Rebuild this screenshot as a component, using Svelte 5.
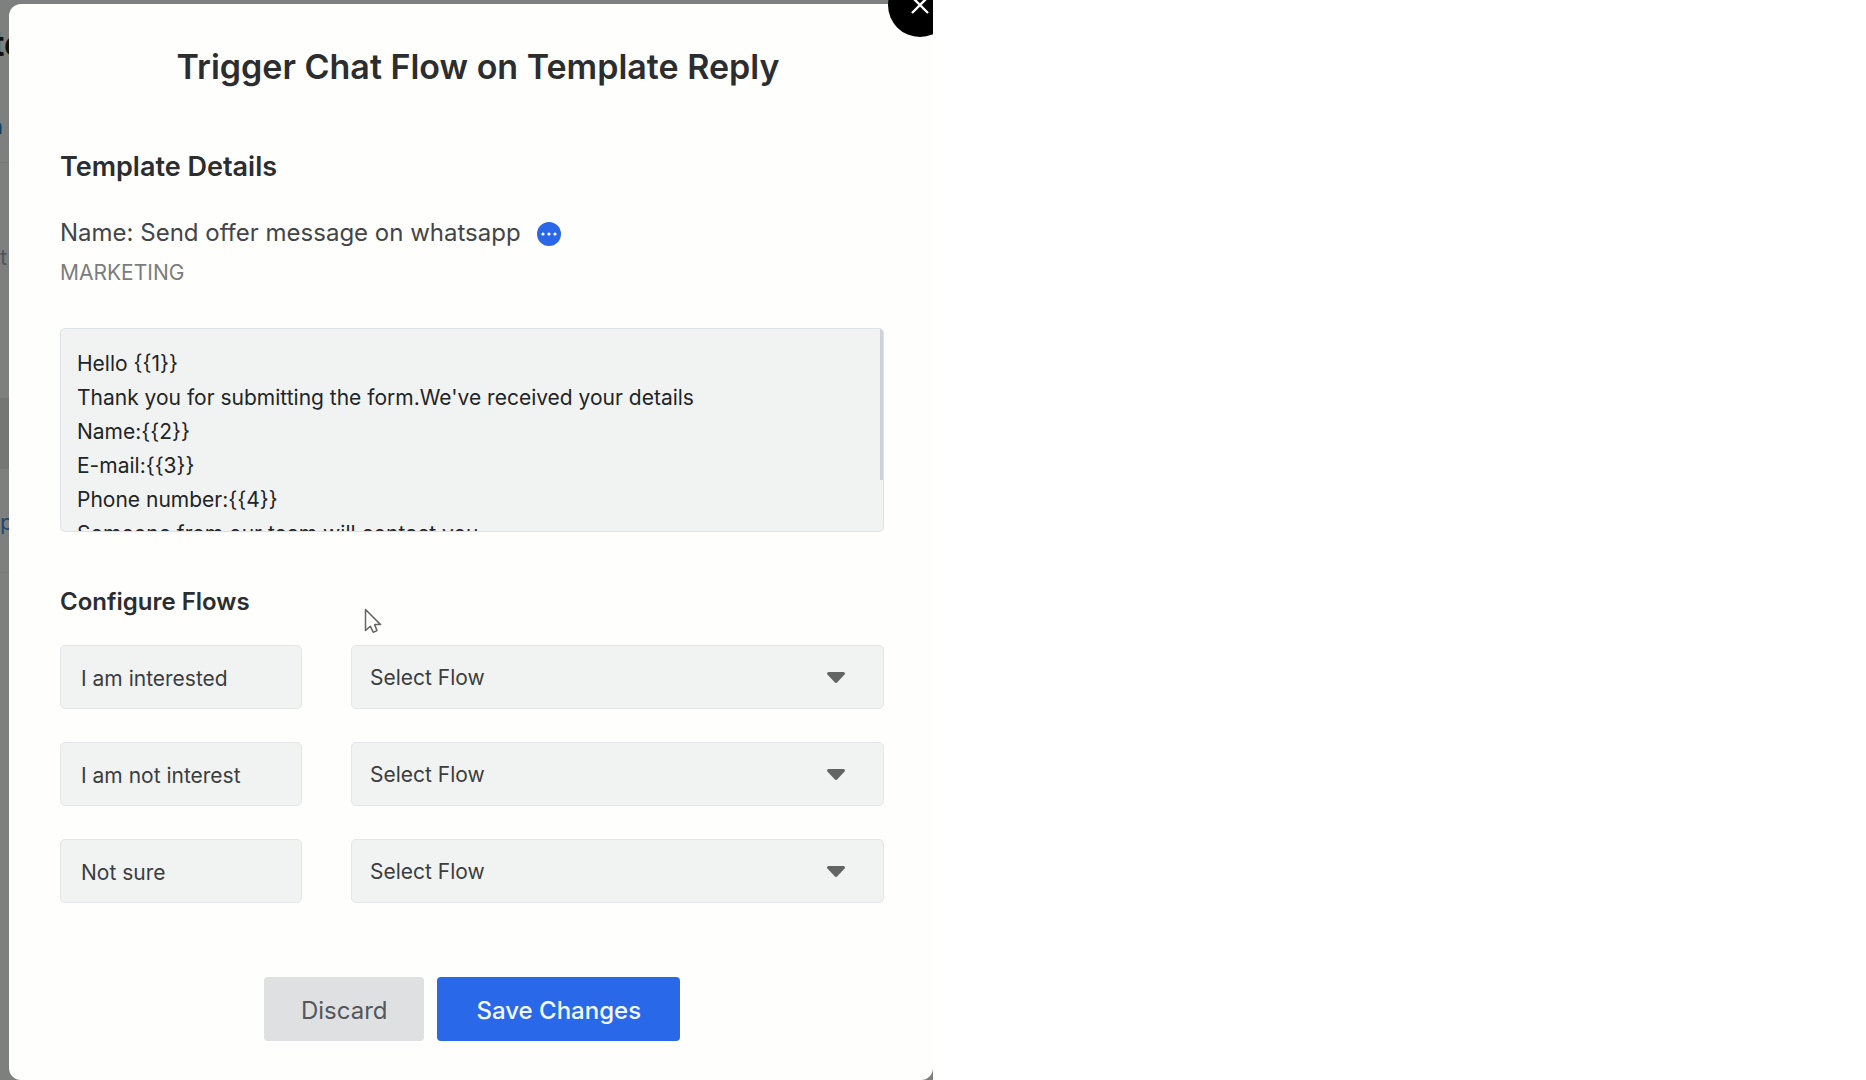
<script>
  const message = [
    'Hello {{1}}',
    "Thank you for submitting the form.We've received your details",
    'Name:{{2}}',
    'E-mail:{{3}}',
    'Phone number:{{4}}',
    'Someone from our team will contact you',
    '',
  ].join('\n');

  const replies = ['I am interested', 'I am not interest', 'Not sure'];

  // Share of the message that fits in the box, and how far it is scrolled.
  let box = $state();
  let thumbSize = $state(75);
  let thumbTop = $state(0);

  function measure() {
    thumbSize = (box.clientHeight / box.scrollHeight) * 100;
    thumbTop = (box.scrollTop / box.scrollHeight) * 100;
  }

  $effect(measure);
</script>

<div class="stage">
  <div class="behind" aria-hidden="true">
    <div class="heading">te</div>
    <div class="link">n</div>
    <div class="rule"></div>
    <div class="label">t</div>
    <div class="band"></div>
    <div class="row">p</div>
    <div class="rule last"></div>
  </div>

  <div class="modal" role="dialog" aria-labelledby="dialog-title">
    <h1 id="dialog-title">Trigger Chat Flow on Template Reply</h1>

    <h2>Template Details</h2>
    <p class="name">
      <span>Name: Send offer message on whatsapp</span>
      <button class="more" type="button" aria-label="More details">
        <svg viewBox="0 0 24 24" width="24" height="24">
          <circle cx="12" cy="12" r="12" fill="#2a68e8" />
          <g fill="#fff">
            <circle cx="6" cy="12" r="1.6" />
            <circle cx="12" cy="12" r="1.6" />
            <circle cx="18" cy="12" r="1.6" />
          </g>
        </svg>
      </button>
    </p>
    <p class="category">MARKETING</p>

    <div class="message">
      <textarea
        readonly
        aria-label="Template message"
        value={message}
        bind:this={box}
        onscroll={measure}
      ></textarea>
      <div class="thumb" style="top: {thumbTop}%; height: {thumbSize}%"></div>
    </div>

    <h3>Configure Flows</h3>
    <div class="rows">
      {#each replies as reply, i}
        <div class="row-item">
          <input type="text" readonly value={reply} aria-label="Reply {i + 1}" />
          <div class="picker">
            <select aria-label="Flow for {reply}">
              <option>Select Flow</option>
            </select>
            <svg viewBox="0 0 20 14" width="20" height="14" aria-hidden="true">
              <path d="M2.5 2.5H17.5L10 10.5Z" fill="#636564" stroke="#636564" stroke-width="3" stroke-linejoin="round" />
            </svg>
          </div>
        </div>
      {/each}
    </div>

    <div class="actions">
      <button class="discard" type="button">Discard</button>
      <button class="save" type="button">Save Changes</button>
    </div>
  </div>

  <button class="close" type="button" aria-label="Close">
    <svg viewBox="0 0 18 18" width="18" height="18">
      <path d="M1 1L17 17M17 1L1 17" stroke="#fff" stroke-width="2.4" fill="none" />
    </svg>
  </button>

  <svg class="pointer" viewBox="0 0 18 26" width="18" height="26" aria-hidden="true">
    <path d="M1.5 1.5V22.5L6.3 18.2L9.2 24.2L13 22.6L10.6 16.6H16.6Z" fill="#fff" stroke="#666" stroke-width="1.5" stroke-linejoin="round" />
  </svg>
</div>

<style>
  :global(body) {
    margin: 0;
    background: #fff;
  }

  .stage {
    position: relative;
    display: grid;
    grid-template-columns: 9px minmax(0, 1fr);
    box-sizing: border-box;
    width: 50%;
    min-height: 100vh;
    padding-top: 4px;
    overflow: hidden;
    background: #7e807f;
    color: #2b2d2f;
    font-family: Inter, 'Liberation Sans', sans-serif;
  }

  .behind {
    display: flex;
    flex-direction: column;
    overflow: hidden;
    font-size: 22px;
    line-height: 30px;
  }

  .heading {
    margin: 22px 0 0 -8px;
    color: #111;
    font-size: 34px;
    font-weight: 700;
    line-height: 36px;
  }

  .link {
    margin: 49px 0 0 -10px;
    color: #123f5f;
  }

  .rule {
    height: 1px;
    margin-top: 21px;
    background: #777978;
  }

  .label {
    margin-top: 79px;
    color: #50555c;
  }

  .band {
    height: 71px;
    margin-top: 126px;
    background: #757776;
  }

  .row {
    margin-top: 38px;
    color: #244873;
  }

  .last {
    margin-top: 35px;
  }

  .modal {
    display: flex;
    flex-direction: column;
    box-sizing: border-box;
    padding: 41px 49px 39px 51px;
    border-radius: 12px;
    background: #fefefd;
  }

  h1,
  h2,
  h3,
  p {
    margin: 0;
  }

  h1 {
    padding-left: 12px;
    font-size: 34px;
    font-weight: 600;
    line-height: 44px;
    text-align: center;
  }

  h2 {
    margin-top: 60px;
    font-size: 27px;
    font-weight: 600;
    line-height: 36px;
  }

  h3 {
    margin-top: 54px;
    font-size: 24px;
    font-weight: 600;
    line-height: 32px;
  }

  .name {
    display: flex;
    align-items: center;
    gap: 16px;
    margin-top: 32px;
    color: #434547;
    font-size: 24px;
    line-height: 32px;
  }

  .more {
    display: flex;
    padding: 2px 0 0;
    border: 0;
    background: none;
  }

  .category {
    margin-top: 9px;
    color: #7b7c7d;
    font-size: 21px;
    line-height: 30px;
  }

  .message {
    position: relative;
    box-sizing: border-box;
    height: 204px;
    margin-top: 40px;
    border: 1px solid #dfe2e4;
    border-radius: 5px;
    overflow: hidden;
    background: #f1f3f3;
  }

  textarea {
    display: block;
    box-sizing: border-box;
    width: 100%;
    height: 100%;
    padding: 18px 16px 14px;
    border: 0;
    outline: 0;
    background: none;
    color: #222426;
    font-family: inherit;
    font-size: 21px;
    line-height: 34px;
    resize: none;
    overflow-y: auto;
    scrollbar-width: none;
  }

  .thumb {
    position: absolute;
    right: 0;
    width: 3px;
    background: #cdd2d9;
    pointer-events: none;
  }

  .rows {
    display: grid;
    gap: 33px;
    margin-top: 27px;
  }

  .row-item {
    display: grid;
    grid-template-columns: 242fr 533fr;
    gap: 49px;
  }

  input,
  select {
    box-sizing: border-box;
    width: 100%;
    min-width: 0;
    height: 64px;
    margin: 0;
    border: 1px solid #e4e6e7;
    border-radius: 5px;
    outline: 0;
    background: #f1f3f3;
    color: #3b3d3f;
    font-family: inherit;
    font-size: 21px;
  }

  input {
    padding: 2px 20px 0;
  }

  select {
    appearance: none;
    padding: 0 64px 0 18px;
  }

  .picker {
    position: relative;
  }

  .picker svg {
    position: absolute;
    top: 26px;
    right: 38px;
    pointer-events: none;
  }

  .actions {
    display: flex;
    justify-content: center;
    gap: 13px;
    margin-top: 74px;
  }

  .actions button {
    height: 64px;
    padding: 2px 37px 0;
    border: 0;
    border-radius: 4px;
    font-family: inherit;
    font-size: 24px;
  }

  .discard {
    background: #dfe0e2;
    color: #55575a;
  }

  .actions .save {
    padding: 2px 39px 0;
    background: #2a68ea;
    color: #f2f8ff;
    font-weight: 500;
  }

  .close {
    position: absolute;
    top: -27px;
    right: -19px;
    display: grid;
    place-items: center;
    width: 64px;
    height: 64px;
    padding: 0;
    border: 0;
    border-radius: 50%;
    background: #000;
  }

  .pointer {
    position: absolute;
    top: 608px;
    left: 364px;
    pointer-events: none;
  }
</style>
